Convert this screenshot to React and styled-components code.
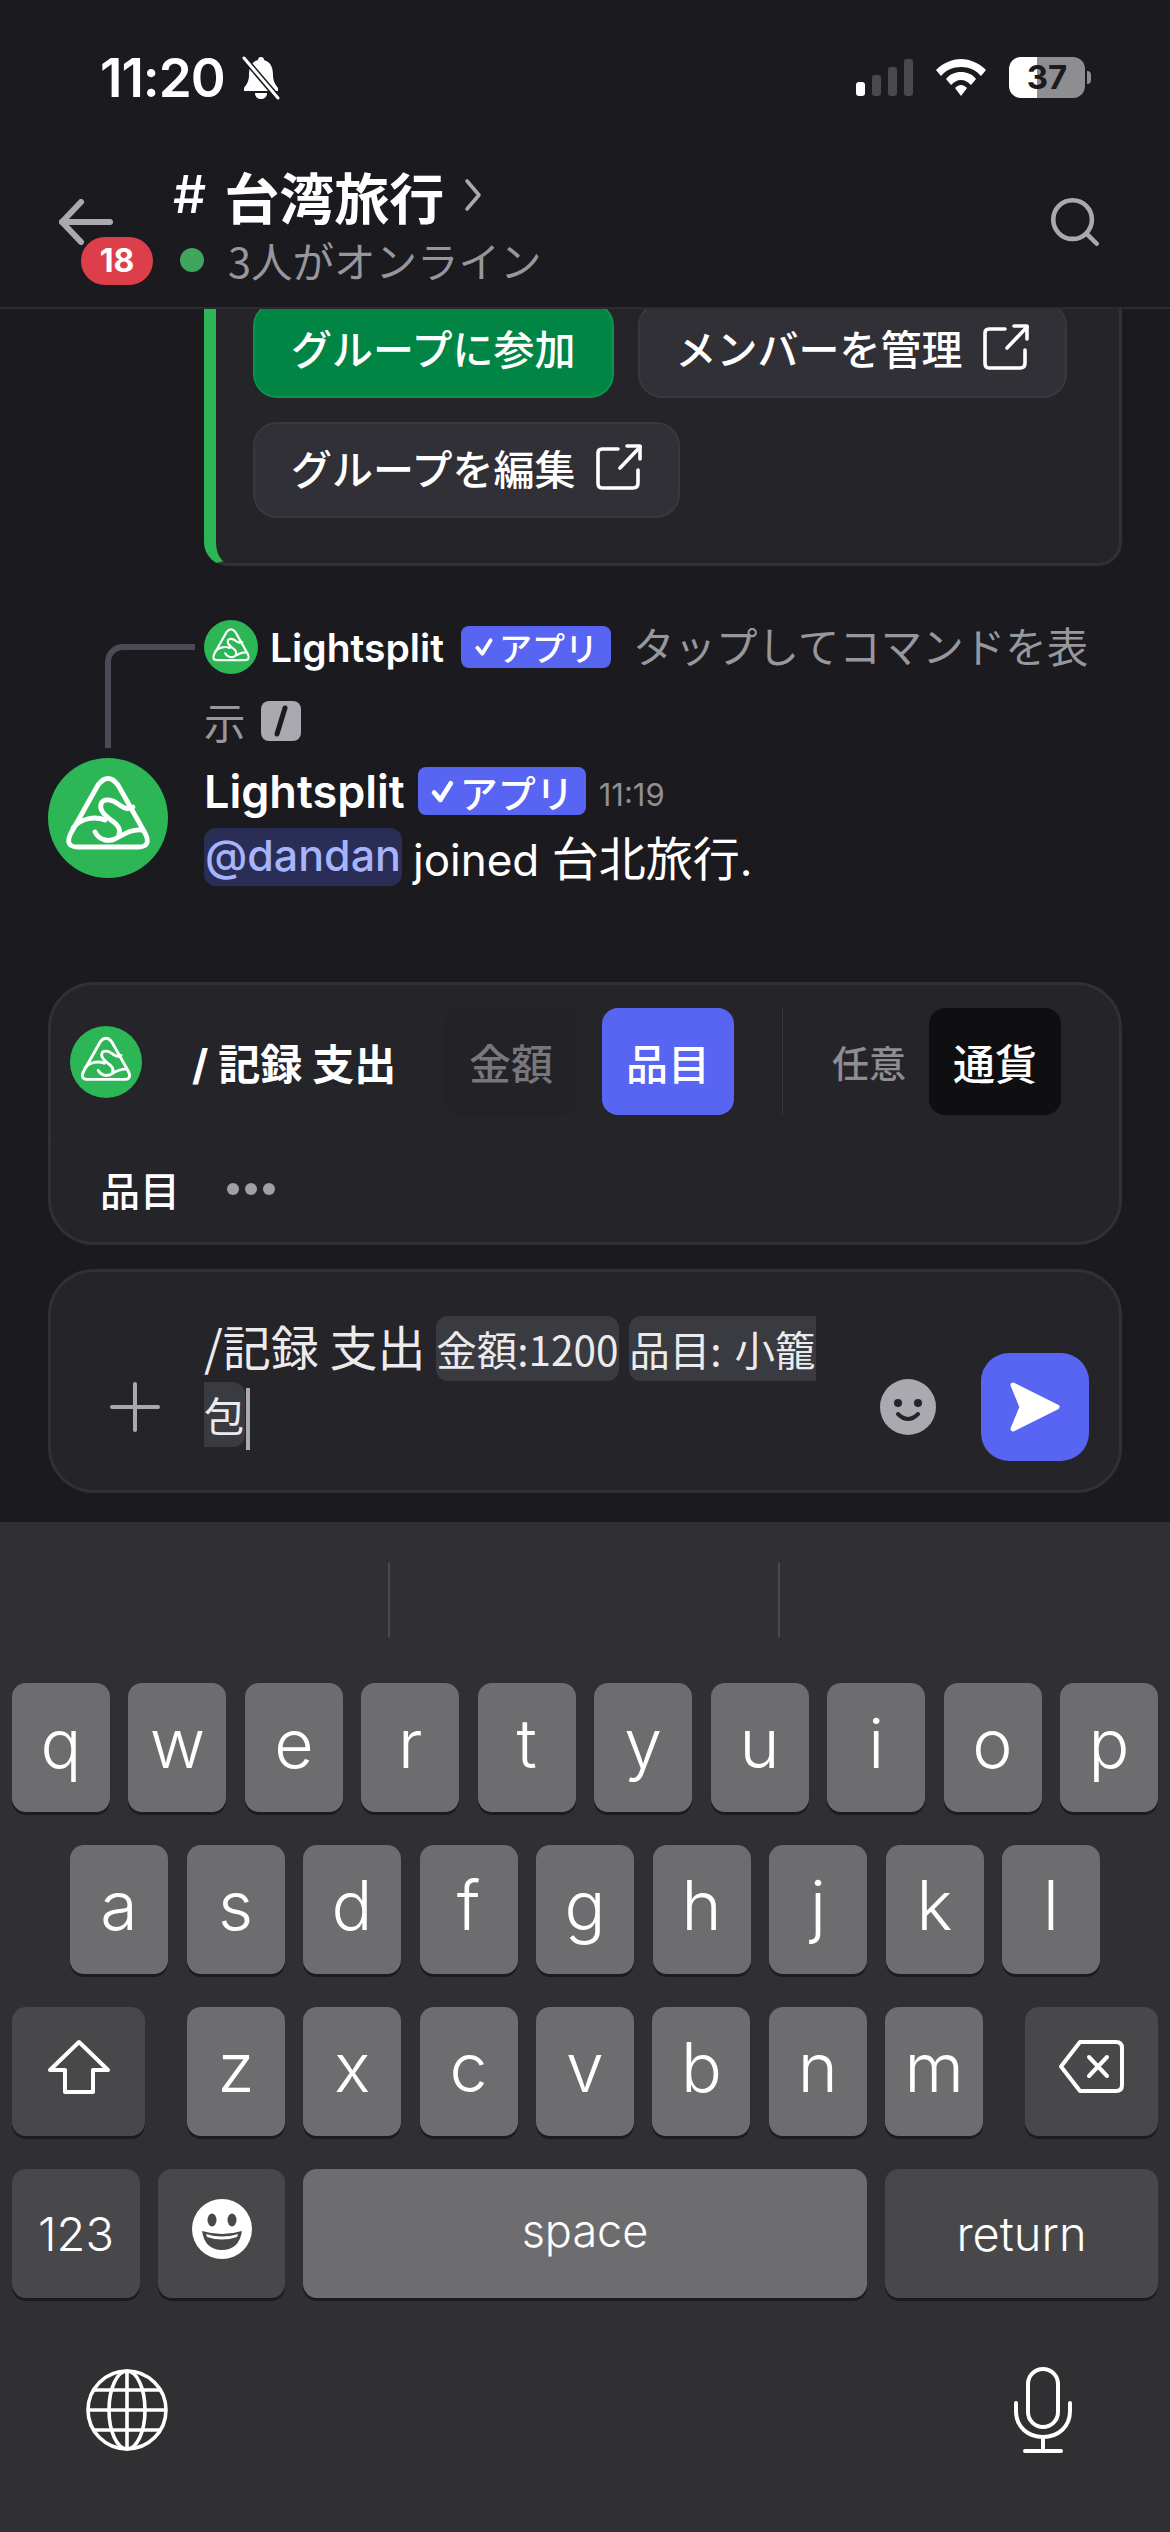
import styled, { createGlobalStyle } from "styled-components";
import { Search } from "lucide-react";

const GlobalStyle = createGlobalStyle`
    html, body {
        margin: 0;
        padding: 0;
        background: #1a1a1f;
    }
    * {
        box-sizing: border-box;
    }
    body {
        font-family: Inter, "Noto Sans CJK JP", sans-serif;
        color: #fff;
    }
`;

const cjk = `"Noto Sans CJK JP", Inter, sans-serif`;
const latinFirst = `Inter, "Noto Sans CJK JP", sans-serif`;

const row1 = ["q", "w", "e", "r", "t", "y", "u", "i", "o", "p"];
const row2 = ["a", "s", "d", "f", "g", "h", "j", "k", "l"];
const row3 = ["z", "x", "c", "v", "b", "n", "m"];

const LogoMark = ({ size }) => (
    <LogoCircle $size={size}>
        <svg viewBox="0 0 120 120" width={size} height={size} fill="none" stroke="#fff" strokeWidth="4.8" strokeLinecap="round" strokeLinejoin="round">
            <path d="M50 27 Q60 14 70 27 L97 75 Q104 89 90 89 L30 89 Q16 89 23 75 Z" />
            <path d="M25 70 C33 60 47 58 57 62" />
            <path d="M85 49 C79 53 75 49 70 46 C64 41 55 40 53 46 C51 53 58 58 63 62 C69 66 73 71 71 76" />
            <path d="M47 74 C51 82 60 84 67 81 C76 76 83 71 94 72" />
        </svg>
    </LogoCircle>
);

const ExternalIcon = () => (
    <svg width="46" height="46" viewBox="0 0 46 46" fill="none" stroke="#fff" strokeWidth="3.6" strokeLinecap="round" strokeLinejoin="round">
        <path d="M22 5 H6 Q2 5 2 9 V39 Q2 44 6 44 H37 Q42 44 42 39 V26" />
        <path d="M24 24 L44 3" />
        <path d="M31 2 H44 V15" />
    </svg>
);

const VerifiedBadge = ({ big }) => (
    <AppBadge $big={big}>
        <svg viewBox="0 0 24 24" width={big ? 25 : 20} height={big ? 25 : 20} fill="none" stroke="#fff" strokeWidth="4.6" strokeLinecap="round" strokeLinejoin="round">
            <path d="M4 13 L10 20 L20 4" />
        </svg>
        アプリ
    </AppBadge>
);

const App = () => {
    return (
        <Page>
            <GlobalStyle />
            <StatusBar>
                <TimeWrap>
                    <Time>11:20</Time>
                    <svg width="44" height="44" viewBox="0 0 42 44">
                        <path fill="#fff" d="M21 1 C23 1 24 2 24 4 C31 6 33 12 33 19 C33 26 36 29 38 32 L38 35 L4 35 L4 32 C6 29 9 26 9 19 C9 12 11 6 18 4 C18 2 19 1 21 1 Z M15 37 H27 C27 41 24 43 21 43 C18 43 15 41 15 37 Z" />
                        <path stroke="#1a1a1f" strokeWidth="6" d="M4 2 L38 42" />
                        <path stroke="#fff" strokeWidth="3" strokeLinecap="round" d="M4 2 L38 42" />
                    </svg>
                </TimeWrap>
                <StatusRight>
                    <Signal>
                        <Bar $h={14} $on />
                        <Bar $h={21} />
                        <Bar $h={29} />
                        <Bar $h={37} />
                    </Signal>
                    <svg width="50" height="37" viewBox="0 0 50 37">
                        <path fill="#fff" d="M25 0 C34 0 43 4 50 11 L45 17 C40 11 33 8 25 8 C17 8 10 11 5 17 L0 11 C7 4 16 0 25 0 Z" />
                        <path fill="#fff" d="M25 13 C31 13 36 15 40 20 L35 26 C32 23 29 21 25 21 C21 21 18 23 15 26 L10 20 C14 15 19 13 25 13 Z" />
                        <path fill="#fff" d="M25 26 C27 26 29 27 31 29 L25 37 L19 29 C21 27 23 26 25 26 Z" />
                    </svg>
                    <Battery>
                        <BatteryBody>37</BatteryBody>
                        <BatteryNub />
                    </Battery>
                </StatusRight>
            </StatusBar>

            <Header>
                <BackWrap>
                    <svg width="56" height="46" viewBox="0 0 56 46" fill="none" stroke="#a9aab0" strokeWidth="6" strokeLinecap="round" strokeLinejoin="round">
                        <path d="M4 23 H52" />
                        <path d="M23 3 L4 23 L23 43" />
                    </svg>
                    <CountBadge>18</CountBadge>
                </BackWrap>
                <TitleColumn>
                    <TitleRow>
                        <Hash>#</Hash>
                        台湾旅行
                        <svg width="18" height="34" viewBox="0 0 18 34" fill="none" stroke="#a9aab0" strokeWidth="3.6" strokeLinecap="round" strokeLinejoin="round">
                            <path d="M3 3 L15 17 L3 31" />
                        </svg>
                    </TitleRow>
                    <OnlineRow>
                        <OnlineDot />
                        3人がオンライン
                    </OnlineRow>
                </TitleColumn>
                <SearchWrap>
                    <Search size={58} color="#a9aab0" strokeWidth={1.9} />
                </SearchWrap>
            </Header>

            <Chat>
                <GroupCard>
                    <ActionButton $primary>グループに参加</ActionButton>
                    <ActionButton>
                        メンバーを管理
                        <ExternalIcon />
                    </ActionButton>
                    <ActionButton>
                        グループを編集
                        <ExternalIcon />
                    </ActionButton>
                </GroupCard>

                <ReplyBlock>
                    <Connector />
                    <ReplyLine>
                        <LogoMark size={54} />
                        <ReplyName>Lightsplit</ReplyName>
                        <VerifiedBadge />
                        <ReplyHint>タップしてコマンドを表</ReplyHint>
                    </ReplyLine>
                    <ReplyLine $second>
                        <ReplyHint $flush>示</ReplyHint>
                        <SlashIcon>
                            <svg width="20" height="32" viewBox="0 0 20 32">
                                <path d="M14 3 L6 29" stroke="#1a1a1f" strokeWidth="5" strokeLinecap="round" />
                            </svg>
                        </SlashIcon>
                    </ReplyLine>
                </ReplyBlock>

                <Message>
                    <LogoMark size={120} />
                    <MessageBody>
                        <NameRow>
                            <Name>Lightsplit</Name>
                            <VerifiedBadge big />
                            <Stamp>11:19</Stamp>
                        </NameRow>
                        <ContentRow>
                            <Mention>@dandan</Mention>
                            <JoinedText>joined <b>台北旅行</b>.</JoinedText>
                        </ContentRow>
                    </MessageBody>
                </Message>

                <CommandPanel>
                    <CommandTop>
                        <LogoMark size={72} />
                        <CommandTitle>/ 記録 支出</CommandTitle>
                        <OptionGroup>
                            <OptionTile $variant="idle">金額</OptionTile>
                            <OptionTile $variant="active">品目</OptionTile>
                        </OptionGroup>
                        <OptionDivider />
                        <OptionalLabel>任意</OptionalLabel>
                        <OptionTile $variant="dark">通貨</OptionTile>
                    </CommandTop>
                    <CommandBottom>
                        <FieldName>品目</FieldName>
                        <Dots>
                            <i />
                            <i />
                            <i />
                        </Dots>
                    </CommandBottom>
                </CommandPanel>

                <InputPanel>
                    <SideSlot $width={50}>
                        <svg width="50" height="50" viewBox="0 0 50 50" stroke="#a9aab0" strokeWidth="4" strokeLinecap="round">
                            <path d="M25 2 V48" />
                            <path d="M2 25 H48" />
                        </svg>
                    </SideSlot>
                    <InputText>
                        /記録 支出 <Chip>金額:1200</Chip> <Chip>品目: 小籠<br />包</Chip>
                        <Caret />
                    </InputText>
                    <SideSlot $width={56}>
                        <svg width="56" height="56" viewBox="0 0 56 56">
                            <circle cx="28" cy="28" r="28" fill="#a9aab0" />
                            <circle cx="18" cy="24" r="4" fill="#242429" />
                            <circle cx="38" cy="24" r="4" fill="#242429" />
                            <path d="M18 35 Q28 45 38 35" fill="none" stroke="#242429" strokeWidth="4" strokeLinecap="round" />
                        </svg>
                    </SideSlot>
                    <SendButton>
                        <svg width="52" height="52" viewBox="0 0 52 52">
                            <path fill="#fff" strokeLinejoin="round" stroke="#fff" strokeWidth="5" d="M4 4 L48 26 L4 48 L13 26 Z" />
                        </svg>
                    </SendButton>
                </InputPanel>
            </Chat>

            <Keyboard>
                <SuggestionStrip>
                    <StripCell />
                    <StripCell $border />
                    <StripCell $border />
                </SuggestionStrip>
                <KeyRow>
                    {row1.map((k) => (
                        <Key key={k}>{k}</Key>
                    ))}
                </KeyRow>
                <KeyRow $inset={70}>
                    {row2.map((k) => (
                        <Key key={k}>{k}</Key>
                    ))}
                </KeyRow>
                <KeyRow>
                    <Key $width={133} $dark>
                        <svg width="64" height="56" viewBox="0 0 64 56" fill="none" stroke="#fff" strokeWidth="4" strokeLinejoin="round">
                            <path d="M32 3 L61 31 H46 V53 H18 V31 H3 Z" />
                        </svg>
                    </Key>
                    <LetterGroup>
                        {row3.map((k) => (
                            <Key key={k}>{k}</Key>
                        ))}
                    </LetterGroup>
                    <Key $width={133} $dark>
                        <svg width="65" height="55" viewBox="0 0 65 55" fill="none" stroke="#fff" strokeWidth="4" strokeLinejoin="round" strokeLinecap="round">
                            <path d="M21 3 H57 Q63 3 63 9 V46 Q63 52 57 52 H21 L2 27.5 Z" />
                            <path d="M30 18 L48 37" />
                            <path d="M48 18 L30 37" />
                        </svg>
                    </Key>
                </KeyRow>
                <KeyRow>
                    <Key $width={128} $dark $label={47}>123</Key>
                    <Key $width={127} $dark>
                        <svg width="62" height="62" viewBox="0 0 62 62">
                            <circle cx="31" cy="31" r="30" fill="#fff" />
                            <ellipse cx="21" cy="22" rx="4.5" ry="6.5" fill="#48484a" />
                            <ellipse cx="41" cy="22" rx="4.5" ry="6.5" fill="#48484a" />
                            <path d="M11 33 Q31 39 51 33 Q48 52 31 52 Q14 52 11 33 Z" fill="#48484a" />
                            <path d="M15 36 Q31 41 47 36 L46 39 Q31 44 16 39 Z" fill="#fff" />
                        </svg>
                    </Key>
                    <Key $width={564} $label={45} $lift>space</Key>
                    <Key $width={273} $dark $label={47}>return</Key>
                </KeyRow>
                <BottomRow>
                    <svg width="84" height="84" viewBox="0 0 84 84" fill="none" stroke="#fff" strokeWidth="3.6">
                        <circle cx="42" cy="42" r="39" />
                        <ellipse cx="42" cy="42" rx="18" ry="39" />
                        <path d="M42 3 V81" />
                        <path d="M3 42 H81" />
                        <path d="M9 22 H75" />
                        <path d="M9 62 H75" />
                    </svg>
                    <svg width="58" height="86" viewBox="0 0 58 86" fill="none" stroke="#fff" strokeWidth="4" strokeLinecap="round">
                        <rect x="14" y="2" width="30" height="58" rx="15" />
                        <path d="M2 36 V44 C2 60 14 70 29 70 C44 70 56 60 56 44 V36" />
                        <path d="M29 70 V84" />
                        <path d="M11 84 H47" />
                    </svg>
                </BottomRow>
            </Keyboard>
        </Page>
    );
};

export default App;

const Page = styled.div`
    width: 1170px;
    height: 2532px;
    display: flex;
    flex-direction: column;
    background: #1a1a1f;
    overflow: hidden;
`;

const StatusBar = styled.div`
    height: 155px;
    flex: none;
    display: flex;
    align-items: flex-start;
    justify-content: space-between;
    padding: 52px 79px 0 100px;
`;

const TimeWrap = styled.div`
    display: flex;
    align-items: center;
    gap: 14px;
`;

const Time = styled.span`
    font-family: Inter, sans-serif;
    font-size: 53px;
    line-height: 52px;
    font-weight: 600;
    letter-spacing: -1px;
`;

const StatusRight = styled.div`
    display: flex;
    align-items: center;
    gap: 23px;
    padding-top: 5px;
`;

const Signal = styled.div`
    display: flex;
    align-items: flex-end;
    gap: 7px;
    height: 37px;
`;

const Bar = styled.i`
    display: block;
    width: 9px;
    height: ${(p) => p.$h}px;
    border-radius: 3px;
    background: ${(p) => (p.$on ? "#fff" : "#4a4a4d")};
`;

const Battery = styled.div`
    display: flex;
    align-items: center;
    gap: 2px;
`;

const BatteryBody = styled.div`
    width: 76px;
    height: 41px;
    border-radius: 12px;
    background: linear-gradient(90deg, #fff 37%, #8e8e90 37%);
    color: #1a1a1f;
    font-family: Inter, sans-serif;
    font-size: 33px;
    line-height: 41px;
    font-weight: 700;
    text-align: center;
`;

const BatteryNub = styled.i`
    display: block;
    width: 4px;
    height: 13px;
    background: #8e8e90;
    border-radius: 0 6px 6px 0;
`;

const Header = styled.header`
    height: 154px;
    flex: none;
    display: flex;
    align-items: flex-start;
    border-bottom: 2px solid #2b2b30;
    position: relative;
    z-index: 2;
    background: #1a1a1f;
`;

const BackWrap = styled.div`
    position: relative;
    width: 115px;
    margin: 44px 0 0 58px;
`;

const CountBadge = styled.span`
    position: absolute;
    left: 23px;
    top: 38px;
    width: 72px;
    height: 48px;
    border-radius: 24px;
    background: #dd3f4a;
    font-family: Inter, sans-serif;
    font-size: 32px;
    line-height: 48px;
    font-weight: 700;
    text-align: center;
`;

const TitleColumn = styled.div`
    display: flex;
    flex-direction: column;
    padding-top: 5px;
`;

const TitleRow = styled.div`
    display: flex;
    align-items: center;
    font-family: ${cjk};
    font-size: 55px;
    line-height: 70px;
    font-weight: 700;
    svg {
        margin-left: 20px;
    }
`;

const Hash = styled.span`
    font-family: Inter, sans-serif;
    font-weight: 500;
    font-size: 52px;
    margin-right: 18px;
`;

const OnlineRow = styled.div`
    display: flex;
    align-items: center;
    gap: 24px;
    margin-left: 7px;
    font-family: ${cjk};
    font-size: 41.5px;
    line-height: 60px;
    color: #96969b;
`;

const OnlineDot = styled.i`
    display: block;
    width: 24px;
    height: 24px;
    border-radius: 50%;
    background: #3fa55f;
`;

const SearchWrap = styled.div`
    margin: 38px 66px 0 auto;
`;

const Chat = styled.main`
    flex: 1;
    display: flex;
    flex-direction: column;
    overflow: hidden;
`;

const GroupCard = styled.section`
    flex: none;
    margin: -59px 48px 0 204px;
    height: 316px;
    display: flex;
    flex-wrap: wrap;
    align-content: flex-start;
    gap: 24px;
    padding: 49px 40px 0 37px;
    background: #242429;
    border: 3px solid #303036;
    border-left: 12px solid #2db655;
    border-radius: 24px;
`;

const ActionButton = styled.button`
    height: 96px;
    display: flex;
    align-items: center;
    gap: 20px;
    padding: 0 36px 6px;
    border-radius: 24px;
    border: 2px solid ${(p) => (p.$primary ? "#0d9150" : "#38383e")};
    background: ${(p) => (p.$primary ? "#008545" : "#303036")};
    color: #fff;
    font-family: ${cjk};
    font-size: 41px;
    font-weight: 500;
`;

const ReplyBlock = styled.div`
    position: relative;
    flex: none;
    margin: 54px 0 0 204px;
    height: 138px;
`;

const Connector = styled.i`
    position: absolute;
    left: -99px;
    top: 24px;
    width: 90px;
    height: 104px;
    border-left: 6px solid #4b4b55;
    border-top: 6px solid #4b4b55;
    border-top-left-radius: 18px;
`;

const ReplyLine = styled.div`
    display: flex;
    align-items: center;
    height: ${(p) => (p.$second ? 62 : 54)}px;
    margin-top: ${(p) => (p.$second ? 16 : 0)}px;
    white-space: nowrap;
`;

const LogoCircle = styled.span`
    flex: none;
    display: block;
    width: ${(p) => p.$size}px;
    height: ${(p) => p.$size}px;
    border-radius: 50%;
    background: #2db655;
    svg {
        display: block;
    }
`;

const ReplyName = styled.span`
    margin: 0 17px 0 12px;
    font-size: 39px;
    font-weight: 600;
`;

const AppBadge = styled.span`
    flex: none;
    display: inline-flex;
    align-items: center;
    justify-content: center;
    gap: 5px;
    width: ${(p) => (p.$big ? 168 : 150)}px;
    height: ${(p) => (p.$big ? 48 : 42)}px;
    border-radius: 8px;
    background: #5865f2;
    font-family: ${cjk};
    font-size: ${(p) => (p.$big ? 38 : 33)}px;
    font-weight: 500;
`;

const ReplyHint = styled.span`
    margin-left: ${(p) => (p.$flush ? 0 : 22)}px;
    margin-top: ${(p) => (p.$flush ? 0 : -4)}px;
    font-family: ${cjk};
    font-size: 41.5px;
    color: #97979c;
`;

const SlashIcon = styled.span`
    display: flex;
    align-items: center;
    justify-content: center;
    width: 40px;
    height: 40px;
    margin-left: 15px;
    border-radius: 8px;
    background: #a9aab0;
`;

const Message = styled.div`
    flex: none;
    display: flex;
    gap: 36px;
    margin: 0 0 0 48px;
    height: 128px;
`;

const MessageBody = styled.div`
    display: flex;
    flex-direction: column;
    margin-top: 9px;
`;

const NameRow = styled.div`
    display: flex;
    align-items: center;
    height: 48px;
`;

const Name = styled.span`
    font-size: 45px;
    font-weight: 600;
    margin-right: 13px;
`;

const Stamp = styled.span`
    margin: 6px 0 0 13px;
    font-size: 31px;
    color: #8f8f94;
`;

const ContentRow = styled.div`
    display: flex;
    align-items: center;
    gap: 11px;
    margin-top: 13px;
    height: 58px;
    font-family: ${latinFirst};
    font-size: 44px;
`;

const Mention = styled.span`
    height: 58px;
    padding: 0 1px;
    font-size: 43px;
    line-height: 54px;
    border-radius: 12px;
    background: #2a2d55;
    color: #a6b4fb;
    font-weight: 500;
`;

const JoinedText = styled.span`
    margin-top: -4px;
    b {
        font-family: ${cjk};
        font-size: 47px;
        font-weight: 400;
    }
`;

const CommandPanel = styled.section`
    flex: none;
    margin: 96px 48px 0;
    height: 263px;
    background: #242429;
    border: 3px solid #303036;
    border-radius: 46px;
`;

const CommandTop = styled.div`
    height: 154px;
    display: flex;
    align-items: center;
    padding-left: 19px;
    border-bottom: 1px solid #27272c;
`;

const CommandTitle = styled.span`
    width: 253px;
    margin-left: 50px;
    font-family: ${latinFirst};
    font-size: 42px;
    font-weight: 700;
    white-space: nowrap;
`;

const OptionGroup = styled.div`
    display: flex;
    gap: 25px;
`;

const OptionTile = styled.span`
    width: 132px;
    height: 107px;
    display: flex;
    align-items: center;
    justify-content: center;
    border-radius: 16px;
    font-family: ${cjk};
    font-size: 42px;
    font-weight: 500;
    background: ${(p) => ({ idle: "#222227", active: "#5865f2", dark: "#0f0f11" })[p.$variant]};
    color: ${(p) => (p.$variant === "idle" ? "#77777c" : "#fff")};
`;

const OptionDivider = styled.i`
    display: block;
    width: 1px;
    height: 107px;
    margin: 0 49px 0 48px;
    background: #36363c;
`;

const OptionalLabel = styled.span`
    width: 97px;
    font-family: ${cjk};
    font-size: 37px;
    font-weight: 500;
    color: #8d8d92;
`;

const CommandBottom = styled.div`
    display: flex;
    align-items: center;
    height: 104px;
    padding-left: 49px;
    gap: 47px;
    padding-bottom: 4px;
`;

const FieldName = styled.span`
    font-family: ${cjk};
    font-size: 40px;
    font-weight: 500;
`;

const Dots = styled.div`
    display: flex;
    gap: 6px;
    i {
        display: block;
        width: 12px;
        height: 12px;
        border-radius: 50%;
        background: #a0a0a6;
    }
`;

const InputPanel = styled.section`
    flex: none;
    margin: 24px 48px 0;
    height: 224px;
    display: flex;
    align-items: flex-end;
    padding: 42px 30px 29px 59px;
    background: #242429;
    border: 3px solid #303036;
    border-radius: 46px;
`;

const SideSlot = styled.div`
    flex: none;
    width: ${(p) => p.$width}px;
    height: 108px;
    display: flex;
    align-items: center;
    justify-content: center;
`;

const InputText = styled.div`
    flex: 1;
    align-self: flex-start;
    margin-left: 44px;
    font-family: ${cjk};
    font-size: 48px;
    line-height: 62px;
    color: #ebebed;
`;

const Chip = styled.span`
    padding: 3px 0;
    border-radius: 12px;
    background: #3a3a41;
    font-size: 40.5px;
    word-spacing: 4px;
`;

const Caret = styled.i`
    display: inline-block;
    width: 4px;
    height: 62px;
    margin-left: 1px;
    vertical-align: middle;
    background: #a9aab0;
`;

const SendButton = styled.div`
    flex: none;
    width: 108px;
    height: 108px;
    margin-left: 45px;
    display: flex;
    align-items: center;
    justify-content: center;
    border-radius: 28px;
    background: #5865f2;
`;

const Keyboard = styled.div`
    flex: none;
    height: 1010px;
    display: flex;
    flex-direction: column;
    background: #303032;
`;

const SuggestionStrip = styled.div`
    height: 161px;
    flex: none;
    display: flex;
    padding: 41px 0 46px;
`;

const StripCell = styled.div`
    width: ${(p) => (p.$border ? "390px" : "388px")};
    border-left: ${(p) => (p.$border ? "2px solid #4a4a4c" : "none")};
`;

const KeyRow = styled.div`
    flex: none;
    display: flex;
    justify-content: space-between;
    height: 129px;
    margin-bottom: 33px;
    padding: 0 ${(p) => p.$inset || 12}px;
`;

const LetterGroup = styled.div`
    display: flex;
    gap: 18.4px;
`;

const Key = styled.div`
    flex: none;
    width: ${(p) => p.$width || 98}px;
    height: 129px;
    display: flex;
    align-items: center;
    justify-content: center;
    border-radius: 14px;
    background: ${(p) => (p.$dark ? "#48484a" : "#6d6d6f")};
    box-shadow: 0 3px 0 #1c1c1e;
    font-family: Inter, sans-serif;
    font-size: ${(p) => p.$label || 68}px;
    font-weight: 300;
    padding-bottom: ${(p) => (p.$lift ? 6 : p.$label ? 0 : 10)}px;
`;

const BottomRow = styled.div`
    flex: none;
    display: flex;
    justify-content: space-between;
    align-items: center;
    padding: 36px 98px 0 85px;
`;
